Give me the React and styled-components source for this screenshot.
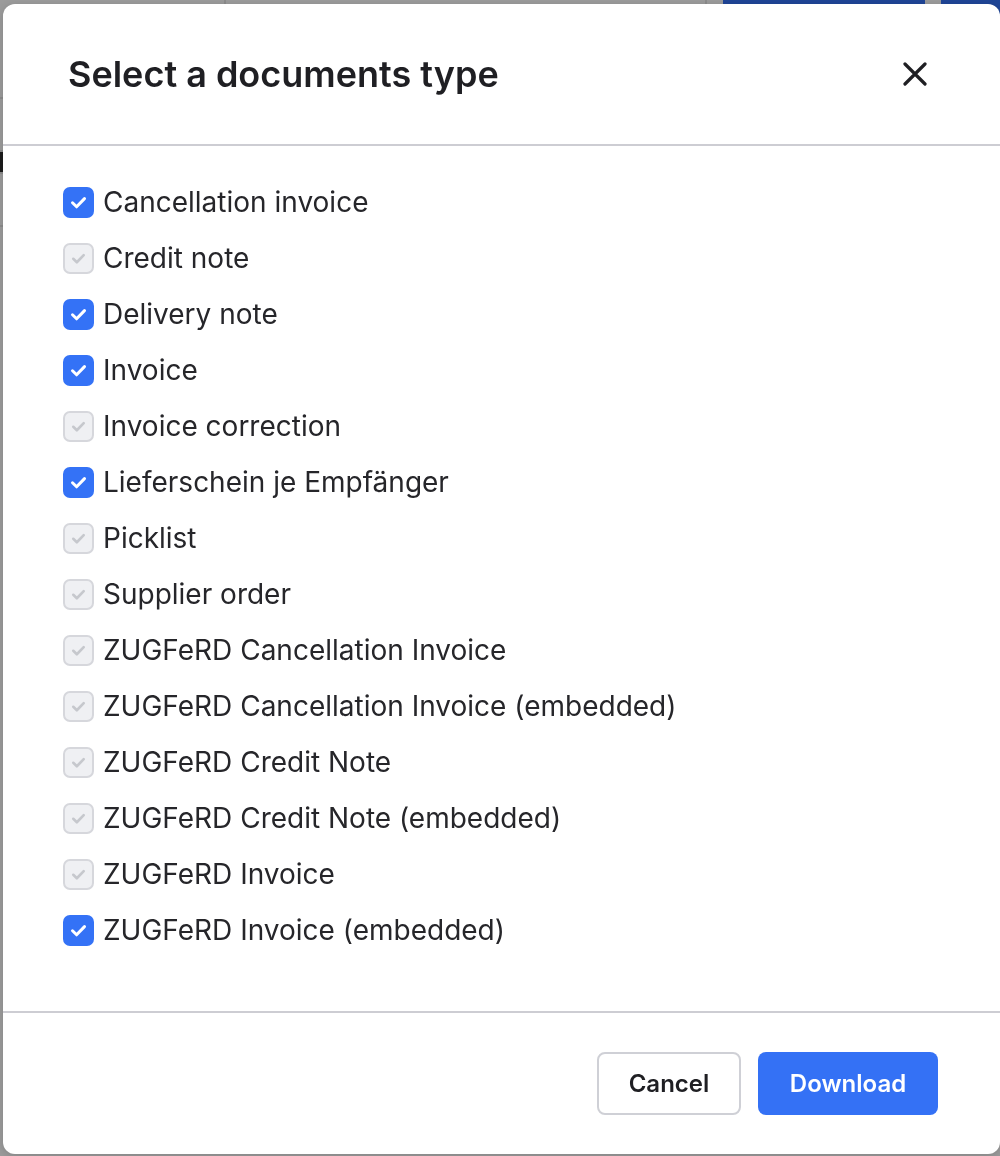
import React, { useState } from 'react';
import styled, { createGlobalStyle } from 'styled-components';

const GlobalStyle = createGlobalStyle`
  html, body {
    margin: 0;
    padding: 0;
  }
  body {
    width: 1000px;
    height: 1156px;
    overflow: hidden;
    background: #9b9b9b;
    font-family: Inter, "Noto Sans", sans-serif;
  }
`;

const Page = styled.div`
  width: 1000px;
  height: 1156px;
  display: flex;
  flex-direction: column;
`;

const PageHeader = styled.div`
  display: flex;
  height: 40px;
  gap: 16px;
`;

const HeaderCell = styled.div`
  width: ${(p) => p.$width}px;
  border-right: 2px solid #8c8c8c;
`;

const HeaderButton = styled.div`
  width: ${(p) => p.$width}px;
  background: #1f4596;
  border-radius: 0 0 6px 6px;
`;

const SideRow = styled.div`
  height: ${(p) => p.$height}px;
  border-bottom: 2px solid #8c8c8c;
  background: ${(p) => (p.$dark ? '#1c1c1c' : 'transparent')};
  width: 40px;
`;

const Overlay = styled.div`
  position: fixed;
  inset: 0;
  display: flex;
  padding: 4px 0 2px 3px;
`;

const Modal = styled.div`
  flex: 1;
  display: flex;
  flex-direction: column;
  background: #fff;
  border-radius: 12px;
  box-shadow: 0 2px 8px rgba(0, 0, 0, 0.15);
  overflow: hidden;
`;

const Header = styled.div`
  height: 140px;
  display: flex;
  align-items: center;
  justify-content: space-between;
  padding: 0 73px 0 65px;
  border-bottom: 2px solid #cdcdd3;
`;

const Title = styled.h2`
  margin: 0;
  font-size: 36px;
  font-weight: 600;
  color: #1f1f23;
`;

const CloseButton = styled.button`
  border: 0;
  background: none;
  padding: 0;
  width: 24px;
  height: 24px;
  display: flex;
  cursor: pointer;
`;

const Body = styled.div`
  flex: 1;
  padding: 28px 0 0 60px;
`;

const Row = styled.label`
  height: 56px;
  display: flex;
  align-items: center;
  gap: 9px;
  cursor: pointer;
`;

const Box = styled.span`
  box-sizing: border-box;
  width: 31px;
  height: 31px;
  border-radius: 7px;
  display: flex;
  align-items: center;
  justify-content: center;
  background: ${(p) => (p.$checked ? '#3472f6' : '#eff0f3')};
  border: ${(p) => (p.$checked ? 'none' : '2px solid #d6d7dc')};
`;

const Label = styled.span`
  font-size: 28px;
  color: #26262a;
`;

const Footer = styled.div`
  height: 143px;
  box-sizing: border-box;
  border-top: 2px solid #cdcdd3;
  display: flex;
  align-items: center;
  justify-content: flex-end;
  gap: 17px;
  padding: 0 62px 0 0;
`;

const Button = styled.button`
  box-sizing: border-box;
  height: 63px;
  width: ${(p) => p.$width}px;
  border-radius: 8px;
  font-family: Inter, "Noto Sans", sans-serif;
  font-size: 24px;
  font-weight: 600;
  cursor: pointer;
  background: ${(p) => (p.$primary ? '#3471f5' : '#fff')};
  color: ${(p) => (p.$primary ? '#fff' : '#1f1f23')};
  border: ${(p) => (p.$primary ? 'none' : '2px solid #cfd0d6')};
`;

const TYPES = [
  ['Cancellation invoice', true],
  ['Credit note', false],
  ['Delivery note', true],
  ['Invoice', true],
  ['Invoice correction', false],
  ['Lieferschein je Empfänger', true],
  ['Picklist', false],
  ['Supplier order', false],
  ['ZUGFeRD Cancellation Invoice', false],
  ['ZUGFeRD Cancellation Invoice (embedded)', false],
  ['ZUGFeRD Credit Note', false],
  ['ZUGFeRD Credit Note (embedded)', false],
  ['ZUGFeRD Invoice', false],
  ['ZUGFeRD Invoice (embedded)', true],
];

const Check = ({ checked }) => (
  <svg width="31" height="31" viewBox="0 0 31 31">
    <path
      d="M9.5 15.8 L13.6 19.8 L21.5 11.6"
      fill="none"
      stroke={checked ? '#fff' : '#c6c8cd'}
      strokeWidth="3"
      strokeLinecap="round"
      strokeLinejoin="round"
    />
  </svg>
);

export default function App() {
  const [selected, setSelected] = useState(TYPES.map(([, c]) => c));

  const toggle = (i) =>
    setSelected((s) => s.map((v, j) => (j === i ? !v : v)));

  return (
    <>
      <GlobalStyle />
      <Page>
        <PageHeader>
          <HeaderCell $width={226} />
          <HeaderCell $width={468} />
          <HeaderButton $width={203} />
          <HeaderButton $width={60} />
        </PageHeader>
        <SideRow $height={57} />
        <SideRow $height={51} />
        <SideRow $height={20} $dark />
        <SideRow $height={51} />
      </Page>
      <Overlay>
        <Modal>
          <Header>
            <Title>Select a documents type</Title>
            <CloseButton aria-label="Close">
              <svg width="24" height="24" viewBox="0 0 24 24">
                <path
                  d="M2 2 L22 22 M22 2 L2 22"
                  stroke="#1f1f23"
                  strokeWidth="3.2"
                  strokeLinecap="round"
                />
              </svg>
            </CloseButton>
          </Header>
          <Body>
            {TYPES.map(([name], i) => (
              <Row key={name} onClick={() => toggle(i)}>
                <Box $checked={selected[i]}>
                  <Check checked={selected[i]} />
                </Box>
                <Label>{name}</Label>
              </Row>
            ))}
          </Body>
          <Footer>
            <Button $width={144}>Cancel</Button>
            <Button $width={180} $primary>Download</Button>
          </Footer>
        </Modal>
      </Overlay>
    </>
  );
}
